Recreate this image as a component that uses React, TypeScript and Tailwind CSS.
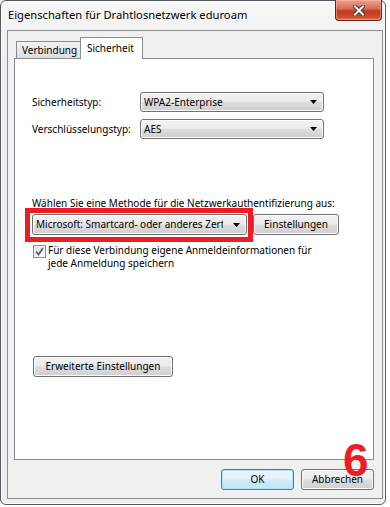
import React from 'react';

const btnBg =
  'bg-[linear-gradient(#f2f2f2_0%,#ebebeb_48%,#dddddd_52%,#cfcfcf_100%)] shadow-[inset_0_0_0_1px_#fcfcfc]';

function Arrow() {
  return (
    <svg width="7" height="4" viewBox="0 0 7 4" className="shrink-0">
      <path d="M0 0H7L3.5 4Z" fill="#000" />
    </svg>
  );
}

function Select({ value, width }: { value: string; width: string }) {
  return (
    <div
      className={`${width} h-[20px] flex items-center justify-between pl-[3px] pr-[6px] border border-[#707070] rounded-[3px] ${btnBg}`}
    >
      <span className="whitespace-nowrap">{value}</span>
      <Arrow />
    </div>
  );
}

function Button({ label, className }: { label: string; className: string }) {
  return (
    <div
      className={`h-[21px] flex items-center justify-center border border-[#707070] rounded-[3px] ${btnBg} ${className}`}
    >
      {label}
    </div>
  );
}

export default function App() {
  return (
    <div className="relative w-[390px] h-[507px] bg-white text-[10px] leading-[13px] text-black font-['Noto_Sans','Open_Sans',sans-serif]">
      {/* Window */}
      <div className="w-[386px] h-[505px] flex flex-col rounded-[6px] border border-[#555a60] bg-[linear-gradient(#f7f7f7,#eeeeee_60px,#eeeeee)] shadow-[inset_0_0_0_1px_#fbfbfb]">
        {/* Title bar */}
        <div className="h-[29px] flex items-start justify-between">
          <span className="pl-[7px] pt-[6px] text-[11.2px] leading-[16px]">
            Eigenschaften für Drahtlosnetzwerk eduroam
          </span>
          <div className="-mt-px mr-[3px] w-[47px] h-[21px] flex items-center justify-center rounded-b-[4px] border border-t-0 border-[#6a2218] bg-[linear-gradient(#eaa08f_0%,#db6f58_42%,#c2381d_55%,#cc4e2e_85%,#da7450_100%)] shadow-[inset_0_0_0_1px_rgba(255,200,180,0.45)]">
            <svg width="12" height="11" viewBox="0 0 12 11">
              <path d="M2 1.5L10 9.5M10 1.5L2 9.5" stroke="#3a3a3a" strokeWidth="4" strokeLinecap="square" />
              <path d="M2 1.5L10 9.5M10 1.5L2 9.5" stroke="#ffffff" strokeWidth="2" strokeLinecap="square" />
            </svg>
          </div>
        </div>

        {/* Client area */}
        <div className="mx-[6px] w-[376px] h-[469px] border border-[#8e8f8f] bg-[#f0f0f0] pl-[6px] pr-[8px] pt-[6px] flex flex-col">
          {/* Tabs */}
          <div className="relative z-10 -mb-px h-[22px] flex items-end">
            <div className="ml-[2px] w-[65px] h-[18px] flex items-center pl-[5px] border border-[#898c95] bg-[linear-gradient(#f3f3f3,#dedede)]">
              Verbindung
            </div>
            <div className="-ml-px w-[63px] h-[22px] flex items-center pl-[6px] pb-[1px] border border-b-0 border-[#898c95] bg-white">
              Sicherheit
            </div>
          </div>

          {/* Tab panel */}
          <div className="w-[360px] h-[402px] border border-[#898c95] bg-white pl-[17px] flex flex-col">
            <div className="mt-[33px] flex items-center">
              <span className="w-[108px]">Sicherheitstyp:</span>
              <Select value="WPA2-Enterprise" width="w-[184px]" />
            </div>
            <div className="mt-[7px] flex items-center">
              <span className="w-[108px]">Verschlüsselungstyp:</span>
              <Select value="AES" width="w-[184px]" />
            </div>

            <p className="mt-[58px]">Wählen Sie eine Methode für die Netzwerkauthentifizierung aus:</p>

            <div className="mt-[4px] flex items-center">
              <div
                className={`w-[215px] h-[21px] flex items-center pl-[3px] pr-[6px] border border-[#707070] rounded-[3px] ${btnBg}`}
              >
                <span className="w-[187px] overflow-hidden whitespace-nowrap">
                  Microsoft: Smartcard- oder anderes Zertifikat
                </span>
                <span className="ml-auto">
                  <Arrow />
                </span>
              </div>
              <Button label="Einstellungen" className="ml-[6px] w-[86px]" />
            </div>

            <div className="mt-[10px] ml-[1px] flex items-start">
              <div className="w-[13px] h-[13px] shrink-0 flex items-center justify-center border border-[#8e8f8f] bg-[linear-gradient(135deg,#dcdcdc,#ffffff)] shadow-[inset_0_0_0_1px_#f4f4f4]">
                <svg width="9" height="9" viewBox="0 0 9 9">
                  <path d="M1 4.5L3.5 7.5L8 1" fill="none" stroke="#4a5f97" strokeWidth="1.8" />
                </svg>
              </div>
              <p className="-mt-[1px] ml-[2px] leading-[13px]">
                Für diese Verbindung eigene Anmeldeinformationen für
                <br />
                jede Anmeldung speichern
              </p>
            </div>

            <Button label="Erweiterte Einstellungen" className="mt-[86px] ml-[1px] w-[140px]" />
          </div>

          {/* Dialog buttons */}
          <div className="mt-[9px] flex justify-end gap-[7px]">
            <div className="w-[73px] h-[21px] flex items-center justify-center rounded-[3px] border border-[#3c7fb1] bg-[linear-gradient(#eaf6fd_0%,#e0f1fb_48%,#d1ebf9_52%,#c4e4f6_100%)] shadow-[inset_0_0_0_1px_#aee0f9]">
              OK
            </div>
            <Button label="Abbrechen" className="w-[73px]" />
          </div>
        </div>
      </div>

      {/* Annotation overlays */}
      <div className="absolute left-[25px] top-[208px] w-[228px] h-[34px] border-[5px] border-[#ee1c25]" />
      <span className="absolute left-[343px] top-[433px] text-[46px] leading-[54px] font-bold text-[#ee1c25] font-['Liberation_Sans',sans-serif]">
        6
      </span>
    </div>
  );
}
